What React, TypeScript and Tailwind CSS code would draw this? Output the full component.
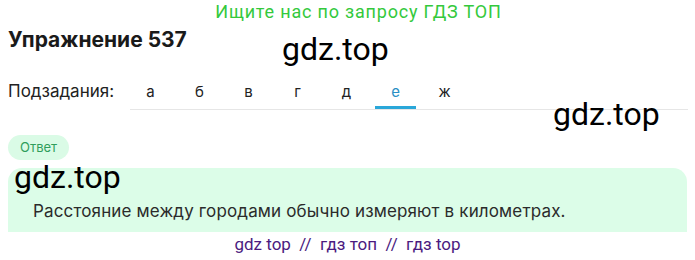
import React from "react";

const tabs = ["а", "б", "в", "г", "д", "е", "ж"];

function Watermark({ className }: { className: string }) {
    return (
        <span
            className={
                "pointer-events-none absolute text-[32px] leading-none text-black font-['Roboto',sans-serif] " +
                className
            }
        >
            gdz.top
        </span>
    );
}

export default function App() {
    return (
        <div className="relative h-[260px] w-[695px] overflow-hidden bg-white font-['Inter',sans-serif]">
            <div className="flex h-[22px] items-center justify-center pl-[22px] text-[18px] tracking-[0.8px] text-[#34c93c] font-['Roboto',sans-serif]">
                Ищите нас по запросу ГДЗ ТОП
            </div>
            <h1 className="mt-[6px] pl-2 text-[21px] font-bold leading-6 text-[#1a1a1a]">
                Упражнение 537
            </h1>

            <div className="mt-[25px] flex items-end pl-2">
                <span className="mb-[6px] w-[122px] text-[17px] text-[#222]">Подзадания:</span>
                <div className="mr-[7px] flex flex-1 gap-2 border-b border-[#e6e6e6]">
                    {tabs.map((t) => (
                        <div
                            key={t}
                            className={
                                t === "е"
                                    ? "-mb-px flex h-[32px] w-[41px] items-start justify-center border-b-[3px] border-[#2aa7d9] pt-[4px] text-[15px] text-[#2a8fc4]"
                                    : "flex h-[32px] w-[41px] items-start justify-center pt-[4px] text-[15px] text-[#222]"
                            }
                        >
                            {t}
                        </div>
                    ))}
                </div>
            </div>

            <div className="mt-[24px] pl-2">
                <span className="inline-flex h-[25px] items-center rounded-full bg-[#dafbe6] px-3 text-[13px] text-[#2f9e5c]">
                    Ответ
                </span>
            </div>
            <div className="mx-2 mt-[8px] flex h-[64px] items-end rounded-t-[14px] bg-[#dcfde8] pb-[8px] pl-[25px] pr-[7px] text-[17px] tracking-[0.15px] text-[#2b2b2b]">
                Расстояние между городами обычно измеряют в километрах.
            </div>
            <div className="flex h-[24px] items-center justify-center text-[17px] text-[#4b1a80] font-['Roboto',sans-serif]">
                gdz top&nbsp;&nbsp;//&nbsp;&nbsp;гдз топ&nbsp;&nbsp;//&nbsp;&nbsp;гдз top
            </div>

            <Watermark className="left-[282px] top-[33px]" />
            <Watermark className="left-[553px] top-[98px]" />
            <Watermark className="left-[14px] top-[161px]" />
        </div>
    );
}
